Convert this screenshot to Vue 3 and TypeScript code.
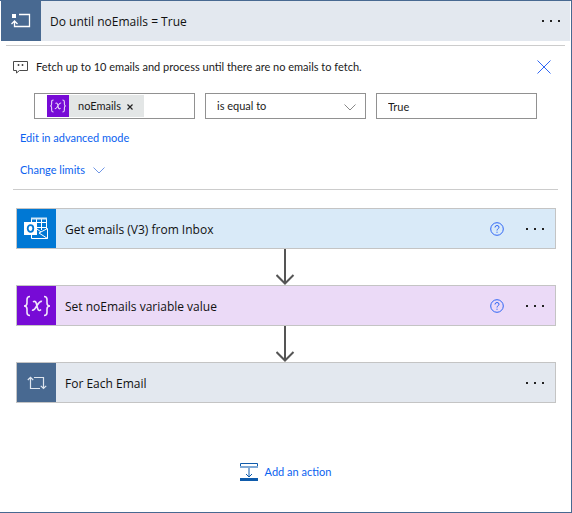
<script setup lang="ts">
import { ref } from 'vue'

interface Step {
  kind: 'outlook' | 'variable' | 'loop'
  title: string
  help: boolean
}

const steps: Step[] = [
  { kind: 'outlook', title: 'Get emails (V3) from Inbox', help: true },
  { kind: 'variable', title: 'Set noEmails variable value', help: true },
  { kind: 'loop', title: 'For Each Email', help: false },
]

const operator = ref('is equal to')
const operand = ref('True')
const hasToken = ref(true)
</script>

<template>
  <main class="scope">
    <header class="scope-head">
      <span class="scope-icon">
        <svg width="20" height="16" viewBox="0 0 20 16" fill="none" stroke="#fff" aria-hidden="true">
          <rect x="1" y="1" width="4" height="4" fill="#fff" stroke="none" />
          <path d="M8 1.500H18.500V13.500H3.500V8M.5 11L3.500 8L6.500 11" stroke-width="1.3" />
        </svg>
      </span>
      <h1>Do until noEmails = True</h1>
      <button class="more" type="button" aria-label="More commands"><i></i><i></i><i></i></button>
    </header>

    <section class="condition">
      <div class="comment">
        <svg width="15" height="13" viewBox="0 0 15 13" fill="none" stroke="#4a4a4a" aria-hidden="true">
          <path d="M.5 .5H14.5V9.5H6.5L3.5 12V9.5H.5Z" />
          <path d="M5.500 3V5M9.500 3V5" stroke-width="1.500" />
        </svg>
        <p>Fetch up to 10 emails and process until there are no emails to fetch.</p>
        <button class="close" type="button" aria-label="Close">
          <svg width="14" height="14" viewBox="0 0 14 14" fill="none" stroke="#2f66f5" aria-hidden="true">
            <path d="M.5 .5L13.5 13.5M13.5 .5L.5 13.5" />
          </svg>
        </button>
      </div>

      <div class="fields">
        <div class="field token-field">
          <span v-if="hasToken" class="token">
            <span class="token-icon">
              <svg width="18" height="14" viewBox="0 0 26 22" fill="none" stroke="#e9d9fa" stroke-width="1.7" aria-hidden="true">
                <path d="M6 1.5Q3 1.5 3 4.5V8Q3 11 .8 11Q3 11 3 14V17.500Q3 20.500 6 20.500M20 1.500Q23 1.500 23 4.500V8Q23 11 25.200 11Q23 11 23 14V17.500Q23 20.500 20 20.500" />
                <path d="M9 7Q11.500 5 12.500 9L13.500 13Q14.500 17 17 14.500M18 6.500Q16 5.500 13 10.500Q10 16 8 15" />
              </svg>
            </span>
            <span>noEmails</span>
            <button class="token-x" type="button" aria-label="Remove noEmails" @click="hasToken = false">
              <svg width="6" height="6" viewBox="0 0 6 6" stroke="#222" stroke-width="1.2" aria-hidden="true">
                <path d="M.5 .5L5.500 5.500M5.500 .5L.5 5.500" />
              </svg>
            </button>
          </span>
        </div>
        <div class="select-wrap">
          <select v-model="operator" class="field" aria-label="Operator">
            <option>is equal to</option>
            <option>is not equal to</option>
          </select>
          <svg class="chevron" width="12" height="7" viewBox="0 0 12 7" fill="none" stroke="#888" aria-hidden="true">
            <path d="M.5 .5L6 6L11.500 .5" />
          </svg>
        </div>
        <input v-model="operand" class="field" type="text" aria-label="Value" />
      </div>

      <a class="link" href="#advanced">Edit in advanced mode</a>
      <a class="link" href="#limits">
        Change limits
        <svg width="12" height="7" viewBox="0 0 12 7" fill="none" stroke="#6f96e6" aria-hidden="true">
          <path d="M.5 .5L6 6L11.500 .5" />
        </svg>
      </a>
    </section>

    <ol class="steps">
      <li v-for="step in steps" :key="step.title">
        <article class="card" :class="step.kind">
          <span class="card-icon">
            <svg v-if="step.kind === 'outlook'" width="25" height="23" viewBox="0 0 25 23" fill="none" stroke="#fff" aria-hidden="true">
              <path d="M7.500 5V1.500H22.500V12M7.500 17V21.500H23.500V11.500L15 16L23.500 21.500M13 5.500H23M13 10.500H22M12.500 1V12M17.500 1V13M13 12L17 15" />
              <path d="M7 1.500H23" stroke-width="2" stroke="#d3e8f8" />
              <rect x="0" y="5" width="13" height="13" fill="#fff" stroke="none" />
              <ellipse cx="6.500" cy="11.500" rx="2.800" ry="3.300" stroke="#0078d4" stroke-width="1.800" />
            </svg>
            <svg v-else-if="step.kind === 'variable'" width="28" height="22" viewBox="0 0 28 22" fill="none" stroke="#f1e6fb" stroke-width="1.600" aria-hidden="true">
              <path d="M7 1.500Q4 1.500 4 4.500V8Q4 11 1 11Q4 11 4 14V17.500Q4 20.500 7 20.500M21 1.500Q24 1.500 24 4.500V8Q24 11 27 11Q24 11 24 14V17.500Q24 20.500 21 20.500" />
              <path d="M10 7Q12.500 5 13.500 9L14.500 13Q15.500 17 18 14.500M19 6.500Q17 5.500 14 10.500Q11 16 9 15" />
            </svg>
            <svg v-else width="20" height="14" viewBox="0 0 20 14" fill="none" stroke="#dfe6ef" stroke-width="1.200" aria-hidden="true">
              <path d="M13 12.500H3.500V1.500M.8 4L3.500 1.300L6.200 4M7 1.500H16.500V12M13.800 9.800L16.500 12.500L19.200 9.800" />
            </svg>
          </span>
          <h2>{{ step.title }}</h2>
          <button v-if="step.help" class="help" type="button" aria-label="Help">
            <svg width="14" height="14" viewBox="0 0 14 14" fill="none" stroke="#2f66f5" aria-hidden="true">
              <circle cx="7" cy="7" r="6.300" />
              <path d="M5 5.500Q5 3.500 7 3.500Q9 3.500 9 5.200Q9 6.200 8 6.800Q7 7.400 7 8.500M7 9.700V10.800" />
            </svg>
          </button>
          <button class="more" type="button" aria-label="More commands"><i></i><i></i><i></i></button>
        </article>
        <svg v-if="step.kind !== 'loop'" class="arrow" width="20" height="36" viewBox="0 0 20 36" fill="none" stroke="#555" stroke-width="2" aria-hidden="true">
          <path d="M9 0V34M.500 26L9 34.500L17.500 26" />
        </svg>
      </li>
    </ol>

    <button class="add" type="button">
      <svg width="18" height="18" viewBox="0 0 18 18" fill="none" stroke="#0f5bab" aria-hidden="true">
        <path d="M.5 4V.5H17.500V4" />
        <path d="M0 4H18" stroke="#7fa9d6" stroke-width="2" />
        <path d="M9 5V13.500M6 11L9 14L12 11" />
        <path d="M0 16.500H18" stroke-width="3" />
      </svg>
      Add an action
    </button>
  </main>
</template>

<style>
body {
  margin: 0;
  background: #fff;
}
</style>

<style scoped>
.scope {
  box-sizing: border-box;
  min-height: 100vh;
  padding: 0 1px;
  border: 1px solid #486991;
  border-left: 0;
  color: #1b1b1b;
  font: 11px/16px Lato, "Noto Sans", sans-serif;
}
button {
  padding: 0;
  border: 0;
  background: none;
  color: inherit;
  font: inherit;
  cursor: pointer;
}
svg {
  display: block;
  flex: none;
}
h1,
h2,
p {
  margin: 0;
}
h1,
h2 {
  flex: 1;
  padding-top: 2px;
  font: 400 12px/16px "Open Sans", "Noto Sans", sans-serif;
  color: #111;
}
.scope-head {
  display: flex;
  align-items: center;
  height: 40px;
  padding-right: 10px;
  background: #e3e8ef;
}
.scope-icon {
  display: grid;
  place-items: center;
  width: 40px;
  height: 40px;
  margin-right: 9px;
  background: #486991;
}
.more {
  display: flex;
  justify-content: space-between;
  width: 18px;
  padding: 8px 0;
}
.more i {
  width: 2px;
  height: 2px;
  background: #222;
}
.condition {
  margin: 4px 5px 0;
  padding: 13px 7px 0;
  border-top: 1px solid #ccc;
}
.condition::after {
  content: "";
  display: block;
  margin-top: 11px;
  border-top: 1px solid #ccc;
}
.comment {
  display: flex;
  align-items: center;
  gap: 8px;
  height: 16px;
}
.comment p {
  flex: 1;
  white-space: nowrap;
}
.close {
  margin-right: 7px;
}
.fields {
  display: grid;
  grid-template-columns: repeat(3, 1fr);
  gap: 10px;
  margin: 18px 21px 0;
}
.field {
  box-sizing: border-box;
  width: 100%;
  height: 26px;
  padding: 0 11px;
  border: 1px solid #919191;
  border-radius: 0;
  background: #fff;
  color: #1b1b1b;
  font: inherit;
}
.token-field {
  display: flex;
  align-items: center;
  padding-left: 12px;
}
.token {
  display: inline-flex;
  align-items: center;
  height: 22px;
  background: #e3e6e6;
}
.token-icon {
  display: grid;
  place-items: center;
  width: 22px;
  height: 22px;
  margin-right: 9px;
  background: #770bd6;
}
.token-x {
  padding: 5px 11px 4px 6px;
}
.select-wrap {
  display: grid;
  align-items: center;
}
.select-wrap > * {
  grid-area: 1 / 1;
}
.select-wrap select {
  appearance: none;
}
.chevron {
  justify-self: end;
  margin: 3px 10px 0 0;
  pointer-events: none;
}
.link {
  display: flex;
  align-items: center;
  gap: 8px;
  width: max-content;
  margin: 11px 0 0 7px;
  color: #0b62f0;
  text-decoration: none;
}
.link + .link {
  margin-top: 16px;
}
.steps {
  margin: 18px 14px 0 15px;
  padding: 0;
  list-style: none;
}
.card {
  display: flex;
  align-items: center;
  box-sizing: border-box;
  height: 41px;
  padding-right: 11px;
  border: 1px solid #c4c4c4;
}
.card-icon {
  display: grid;
  place-items: center;
  align-self: stretch;
  width: 39px;
  margin-right: 9px;
}
.outlook {
  background: #d9eaf8;
}
.outlook .card-icon {
  background: #0078d4;
}
.variable {
  background: #ebdaf7;
}
.variable .card-icon {
  background: #770bd6;
}
.loop {
  background: #e3e8ef;
}
.loop .card-icon {
  background: #486991;
}
.help {
  margin-right: 22px;
}
.arrow {
  margin: 0 auto;
}
.add {
  display: flex;
  align-items: center;
  gap: 7px;
  margin: 60px auto 0;
  color: #0b62f0;
}
</style>
